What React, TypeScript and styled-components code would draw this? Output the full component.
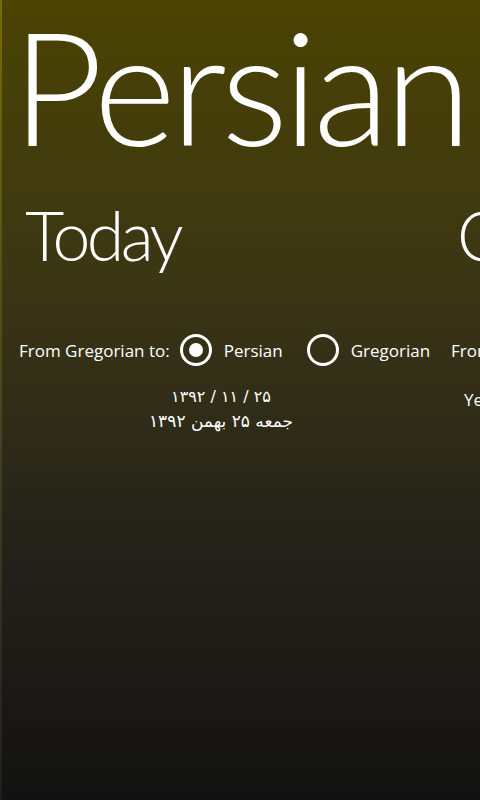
import React, { useState } from 'react'
import styled, { createGlobalStyle } from 'styled-components'

const GlobalStyle = createGlobalStyle`
  html, body {
    margin: 0;
    padding: 0;
    height: 100%;
    overflow: hidden;
    background: #111;
  }
  #root {
    height: 100%;
  }
`

const Panorama = styled.div`
  background: linear-gradient(180deg, #4b4302 0%, #3b3614 35%, #26241a 65%, #121212 100%);
  border-left: 2px solid;
  border-image: linear-gradient(180deg, #7a6b00 0%, #4a4420 50%, #1e1e1e 100%) 1;
  box-sizing: border-box;
  color: #fff;
  font-family: "Open Sans", "Liberation Sans", sans-serif;
  height: 800px;
  overflow: hidden;
  width: 480px;
`

const Title = styled.h1`
  font-family: Lato, "Open Sans", sans-serif;
  font-size: 158px;
  font-weight: 300;
  letter-spacing: -5px;
  line-height: 1;
  margin: 0 0 0 10px;
  padding-top: 6px;
  white-space: nowrap;
`

const Items = styled.div`
  display: flex;
  margin-top: 37px;
`

const Item = styled.section`
  box-sizing: border-box;
  flex: 0 0 432px;
  min-width: 0;
  padding-left: 17px;
`

const ItemHeader = styled.h2`
  font-family: Lato, "Open Sans", sans-serif;
  font-size: 68px;
  font-weight: 300;
  letter-spacing: -3.5px;
  line-height: 1;
  margin: 0 0 65px 6px;
  white-space: nowrap;
`

const Row = styled.div`
  align-items: center;
  display: flex;
  font-size: 17px;
  min-height: 32px;
  white-space: nowrap;
`

const Label = styled.span`
  margin-right: 10px;
`

const Radio = styled.label`
  align-items: center;
  cursor: pointer;
  display: flex;
  margin-right: 24px;
`

const Circle = styled.span<{ $checked: boolean }>`
  align-items: center;
  border: 3px solid #fff;
  border-radius: 50%;
  box-sizing: border-box;
  display: flex;
  height: 32px;
  justify-content: center;
  margin-right: 12px;
  width: 32px;

  &::after {
    background: #fff;
    border-radius: 50%;
    content: '';
    display: ${p => (p.$checked ? 'block' : 'none')};
    height: 14px;
    width: 14px;
  }
`

const Result = styled.div`
  font-family: "DejaVu Sans", "Liberation Sans", sans-serif;
  font-size: 17px;
  line-height: 24px;
  margin-top: 19px;
  text-align: center;
  width: 404px;
`

const ResultLine = styled.div<{ $rtl?: boolean }>`
  direction: ${p => (p.$rtl ? 'rtl' : 'ltr')};
  font-size: ${p => (p.$rtl ? '17px' : '16px')};
`

const Field = styled.div`
  font-size: 17px;
  margin: 22px 0 0 13px;
`

export default function App() {
  const [mode, setMode] = useState<'persian' | 'gregorian'>('persian')

  return (
    <>
      <GlobalStyle />
      <Panorama>
        <Title>Persian Calendar</Title>
        <Items>
          <Item>
            <ItemHeader>Today</ItemHeader>
            <Row>
              <Label>From Gregorian to:</Label>
              <Radio onClick={() => setMode('persian')}>
                <Circle $checked={mode === 'persian'} />
                Persian
              </Radio>
              <Radio onClick={() => setMode('gregorian')}>
                <Circle $checked={mode === 'gregorian'} />
                Gregorian
              </Radio>
            </Row>
            <Result>
              <ResultLine>۱۳۹۲ / ۱۱ / ۲۵</ResultLine>
              <ResultLine $rtl>جمعه ۲۵ بهمن ۱۳۹۲</ResultLine>
            </Result>
          </Item>
          <Item>
            <ItemHeader>Convert</ItemHeader>
            <Row>
              <Label>From Persian to:</Label>
            </Row>
            <Field>Year</Field>
          </Item>
        </Items>
      </Panorama>
    </>
  )
}
